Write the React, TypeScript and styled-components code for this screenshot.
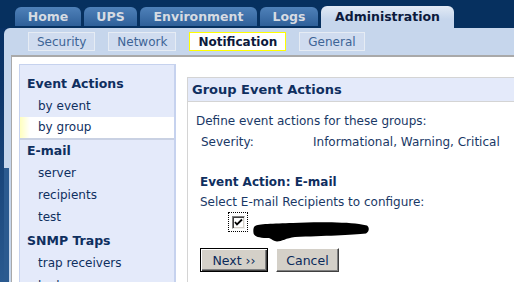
import React from 'react'
import styled, { createGlobalStyle, css } from 'styled-components'

const GlobalStyle = createGlobalStyle`
  html, body {
    margin: 0;
    padding: 0;
  }
  body {
    font-family: 'DejaVu Sans', Verdana, sans-serif;
    font-size: 12px;
  }
`

const NAVY = '#0f2f5f'

const Page = styled.div`
  width: 514px;
  height: 282px;
  overflow: hidden;
  display: flex;
  flex-direction: column;
  background: linear-gradient(to bottom, #062f62 0%, #0b3468 30%, #2a5a90 100%);
`

const TabBar = styled.div`
  height: 28px;
  flex-shrink: 0;
  display: flex;
  align-items: flex-end;
  gap: 3px;
  padding-left: 15px;
  background: #06305f;
`

const Tab = styled.div<{ $width: number; $active?: boolean }>`
  width: ${({ $width }) => $width}px;
  box-sizing: border-box;
  display: flex;
  align-items: center;
  justify-content: center;
  border-radius: 6px 6px 0 0;
  font-weight: bold;
  font-size: 12.5px;
  ${({ $active }) =>
    $active
      ? css`
          height: 22px;
          padding-bottom: 2px;
          background: linear-gradient(to bottom, #e2eaf5, #c6d6ec 60%);
          color: #0c1a3c;
        `
      : css`
          height: 19px;
          margin-bottom: 2px;
          background: linear-gradient(to bottom, #4f81b9, #2f6099);
          color: #d6dbe2;
        `}
`

/* the light blue frame; its left strip turns into the page blue lower down */
const Panel = styled.div`
  flex: 1;
  min-height: 0;
  display: flex;
  flex-direction: column;
  margin-left: 4px;
  background:
    linear-gradient(to bottom, #c6d6ec 140px, #2b5a8f 140px) left top / 5px 100% no-repeat,
    #c6d6ec;
  border-top-left-radius: 6px;
`

const SubNav = styled.div`
  height: 27px;
  flex-shrink: 0;
  display: flex;
  align-items: center;
  gap: 13px;
  padding-left: 24px;
`

const SubButton = styled.div<{ $active?: boolean }>`
  height: 19px;
  box-sizing: border-box;
  padding: 0 8px;
  display: flex;
  align-items: center;
  font-size: 12px;
  ${({ $active }) =>
    $active
      ? css`
          border: 1px solid #ffff00;
          background: #ffffff;
          color: #0c1a3c;
          font-weight: bold;
        `
      : css`
          border: 1px solid #e6ecf4;
          background: #d0dcef;
          color: #3d6496;
        `}
`

const Content = styled.div`
  flex: 1;
  min-height: 0;
  display: flex;
  align-items: flex-start;
  margin-left: 7px;
  padding: 7px 0 0 7px;
  background: #ffffff;
  border-top: 2px solid #a9a9a9;
  border-left: 1px solid #a9a9a9;
`

const Sidebar = styled.div`
  width: 157px;
  flex-shrink: 0;
  box-sizing: border-box;
  padding-top: 8px;
  height: 240px;
  background: #e4eafa;
  border: 1px solid #c6d2ee;
  border-right-width: 2px;
`

const GroupTitle = styled.div<{ $gap?: number }>`
  height: 22px;
  line-height: 22px;
  padding-left: 7px;
  margin-top: ${({ $gap }) => $gap ?? 0}px;
  font-weight: bold;
  font-size: 12.5px;
  color: ${NAVY};
`

const NavItem = styled.div<{ $selected?: boolean }>`
  height: 22px;
  line-height: 22px;
  box-sizing: border-box;
  padding-left: 18px;
  color: ${NAVY};
  ${({ $selected }) =>
    $selected &&
    css`
      height: 23px;
      line-height: 21px;
      background: linear-gradient(to right, #ffffbe 0px, #ffffff 10px);
      border-bottom: 2px solid #c9d1e3;
    `}
`

const Main = styled.div`
  flex: 1;
  padding: 13px 0 0 11px;
`

const Box = styled.div`
  height: 210px;
  border: 1px solid #d4d4d4;
  border-right: none;
`

const BoxHeader = styled.div`
  height: 23px;
  line-height: 23px;
  padding-left: 4px;
  background: #e4eafa;
  border-bottom: 1px solid #d4d4d4;
  font-weight: bold;
  font-size: 13px;
  color: ${NAVY};
`

const BoxBody = styled.div`
  padding: 9px 0 0 8px;
  color: #193866;
`

const Line = styled.div<{ $indent?: number; $gap?: number; $bold?: boolean }>`
  line-height: 20px;
  padding-left: ${({ $indent }) => $indent ?? 0}px;
  margin-top: ${({ $gap }) => $gap ?? 0}px;
  font-weight: ${({ $bold }) => ($bold ? 'bold' : 'normal')};
  color: ${({ $bold }) => ($bold ? NAVY : '#193866')};
`

const FieldRow = styled.div`
  display: flex;
  line-height: 20px;
  padding-left: 5px;
  margin-top: 1px;
`

const FieldLabel = styled.span`
  width: 112px;
`

const CheckRow = styled.div`
  height: 22px;
  display: flex;
  align-items: flex-start;
  padding-left: 32px;
`

const FocusRing = styled.span`
  width: 20px;
  height: 20px;
  box-sizing: border-box;
  border: 1px dotted #000000;
  display: flex;
  align-items: center;
  justify-content: center;
`

const CheckBox = styled.span`
  width: 13px;
  height: 13px;
  box-sizing: border-box;
  background: #ffffff;
  border: 1px solid;
  border-color: #808080 #f0f0f0 #f0f0f0 #808080;
  box-shadow: inset 1px 1px 0 #404040, inset -1px -1px 0 #d4d0c8;
  display: flex;
  align-items: center;
  justify-content: center;
`

const Redaction = styled.svg`
  margin: 9px 0 0 5px;
  flex-shrink: 0;
`

const Buttons = styled.div`
  display: flex;
  gap: 8px;
  padding-left: 4px;
  margin-top: 14px;
`

const Button = styled.div<{ $width: number; $default?: boolean }>`
  width: ${({ $width }) => $width}px;
  height: 24px;
  box-sizing: border-box;
  display: flex;
  align-items: center;
  justify-content: center;
  background: #d4d0c8;
  color: #0a2a5a;
  font-size: 12.5px;
  border: 1px solid;
  ${({ $default }) =>
    $default
      ? css`
          border-color: #000000;
          box-shadow: inset 1px 1px 0 #ffffff, inset -1px -1px 0 #404040, inset -2px -2px 0 #808080;
        `
      : css`
          border-color: #ffffff #404040 #404040 #ffffff;
          box-shadow: inset -1px -1px 0 #808080;
        `}
`

const tabs = [
  { label: 'Home', width: 66 },
  { label: 'UPS', width: 53 },
  { label: 'Environment', width: 117 },
  { label: 'Logs', width: 58 },
  { label: 'Administration', width: 133, active: true },
]

const subTabs = ['Security', 'Network', 'Notification', 'General']

export default function App() {
  return (
    <>
      <GlobalStyle />
      <Page>
        <TabBar>
          {tabs.map((t) => (
            <Tab key={t.label} $width={t.width} $active={t.active}>
              {t.label}
            </Tab>
          ))}
        </TabBar>
        <Panel>
          <SubNav>
            {subTabs.map((s) => (
              <SubButton key={s} $active={s === 'Notification'}>
                {s}
              </SubButton>
            ))}
          </SubNav>
          <Content>
            <Sidebar>
              <GroupTitle>Event Actions</GroupTitle>
              <NavItem>by event</NavItem>
              <NavItem $selected>by group</NavItem>
              <GroupTitle>E-mail</GroupTitle>
              <NavItem>server</NavItem>
              <NavItem>recipients</NavItem>
              <NavItem>test</NavItem>
              <GroupTitle $gap={2}>SNMP Traps</GroupTitle>
              <NavItem>trap receivers</NavItem>
              <NavItem>test</NavItem>
            </Sidebar>
            <Main>
              <Box>
                <BoxHeader>Group Event Actions</BoxHeader>
                <BoxBody>
                  <Line>Define event actions for these groups:</Line>
                  <FieldRow>
                    <FieldLabel>Severity:</FieldLabel>
                    <span>Informational, Warning, Critical</span>
                  </FieldRow>
                  <Line $indent={4} $gap={20} $bold>
                    Event Action: E-mail
                  </Line>
                  <Line $indent={4}>Select E-mail Recipients to configure:</Line>
                  <CheckRow>
                    <FocusRing>
                      <CheckBox>
                        <svg width="9" height="9" viewBox="0 0 9 9">
                          <path d="M1 4 L3 6.5 L8 1.5" fill="none" stroke="#000" strokeWidth="1.8" />
                        </svg>
                      </CheckBox>
                    </FocusRing>
                    <Redaction width="117" height="21" viewBox="0 0 117 21">
                      <path
                        d="M2 5 C5 3 20 2.5 40 2 C60 1 90 1 106 3 L114 4.5 C116.5 6 116.5 11 113 12.5 C100 14 70 15 42 16 C33 17 29 20.5 24 20.5 C21 20.5 19 18 16 17 C8 17 1 16 0.5 12 C0 9 0.5 6 2 5 Z"
                        fill="#000"
                      />
                    </Redaction>
                  </CheckRow>
                  <Buttons>
                    <Button $width={68} $default>
                      Next ››
                    </Button>
                    <Button $width={63}>Cancel</Button>
                  </Buttons>
                </BoxBody>
              </Box>
            </Main>
          </Content>
        </Panel>
      </Page>
    </>
  )
}
